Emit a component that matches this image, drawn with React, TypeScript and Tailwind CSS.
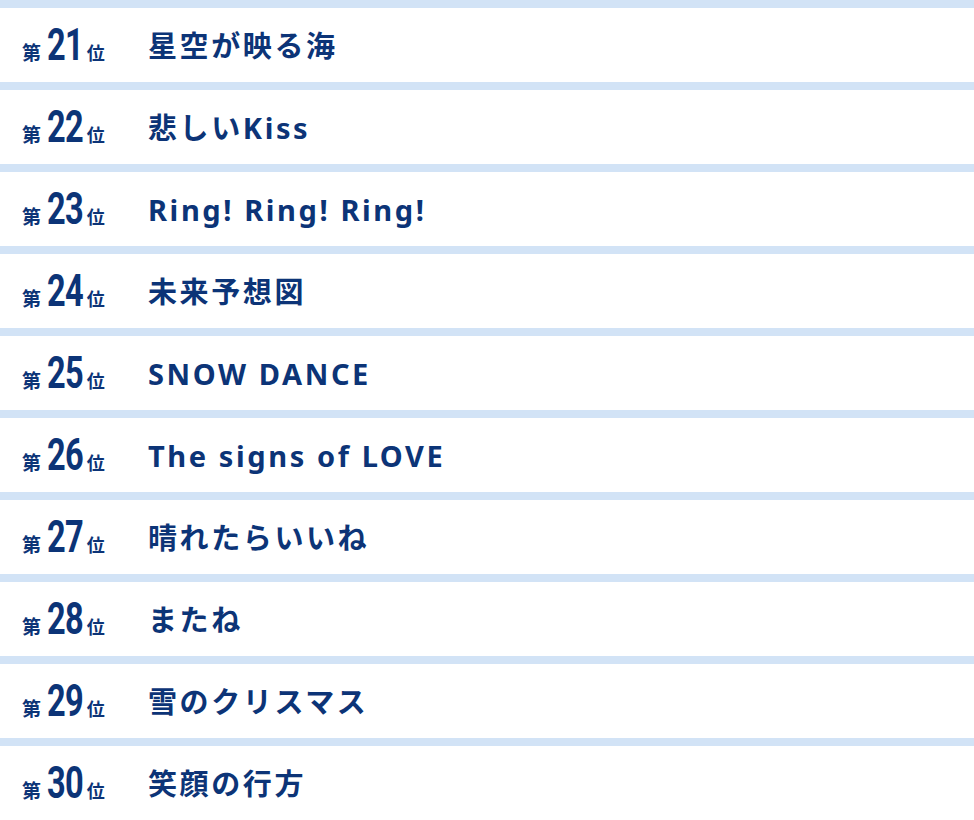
const ranking = [
  { rank: 21, title: '星空が映る海' },
  { rank: 22, title: '悲しいKiss' },
  { rank: 23, title: 'Ring! Ring! Ring!' },
  { rank: 24, title: '未来予想図' },
  { rank: 25, title: 'SNOW DANCE' },
  { rank: 26, title: 'The signs of LOVE' },
  { rank: 27, title: '晴れたらいいね' },
  { rank: 28, title: 'またね' },
  { rank: 29, title: '雪のクリスマス' },
  { rank: 30, title: '笑顔の行方' },
];

const jp = "font-['Noto_Sans_CJK_JP',sans-serif]";

export default function App() {
  return (
    <main className="flex min-h-screen w-full flex-col bg-white text-[#0c3477]">
      {ranking.map((item) => (
        <div key={item.rank} className="flex flex-col">
          <div className="h-[8px] bg-[#d2e3f6]" />
          <div className="flex h-[74px] items-center">
            <div className="flex w-[148px] items-baseline pl-[22px]">
              <span className={`${jp} text-[19px] font-bold leading-none`}>第</span>
              <span className="ml-[6px] mr-[-12px] inline-block origin-left scale-x-[0.74] font-['Roboto',sans-serif] text-[44px] font-bold leading-none tracking-[-0.02em]">
                {item.rank}
              </span>
              <span className={`${jp} ml-[3px] text-[18px] font-bold leading-none`}>位</span>
            </div>
            <p
              className={`font-['Noto_Sans','Noto_Sans_CJK_JP',sans-serif] text-[29px] font-[750] leading-none tracking-[2.6px]`}
            >
              {item.title}
            </p>
          </div>
        </div>
      ))}
    </main>
  );
}
